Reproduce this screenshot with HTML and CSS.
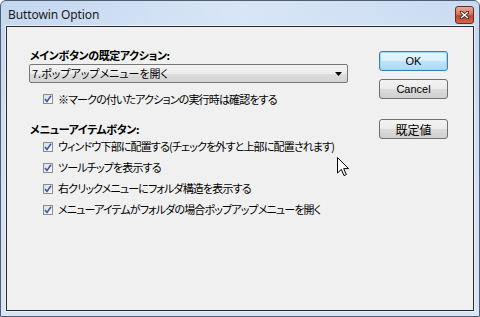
FILE: index.html
```html
<!DOCTYPE html>
<html lang="ja">
<head>
<meta charset="utf-8">
<title>Buttowin Option</title>
<link rel="stylesheet" href="styles.css">
</head>
<body>
<div class="window">
  <div class="titlebar">
    <span class="title">Buttowin Option</span>
    <span class="close"><svg width="9" height="8" viewBox="0 0 9 8"><path d="M1 1 L8 7 M8 1 L1 7" stroke="#3a1a1a" stroke-width="3" stroke-linecap="square"/><path d="M1 1 L8 7 M8 1 L1 7" stroke="#ffffff" stroke-width="1.6"/></svg></span>
  </div>
  <div class="client">
    <div class="left">
      <div class="heading">メインボタンの既定アクション:</div>
      <div class="combo">
        <span class="combo-text">7.ポップアップメニューを開く</span>
        <svg class="combo-arrow" width="7" height="4" viewBox="0 0 7 4"><path d="M0 0 H7 L3.5 4 Z" fill="#000"/></svg>
      </div>
      <div class="row first"><span class="cb"><svg width="8" height="8" viewBox="0 0 8 8"><path d="M1 4 L3 6.5 L7 0.8" fill="none" stroke="#4257a6" stroke-width="1.6"/></svg></span>※マークの付いたアクションの実行時は確認をする</div>
      <div class="heading second">メニューアイテムボタン:</div>
      <div class="row"><span class="cb"><svg width="8" height="8" viewBox="0 0 8 8"><path d="M1 4 L3 6.5 L7 0.8" fill="none" stroke="#4257a6" stroke-width="1.6"/></svg></span>ウィンドウ下部に配置する(チェックを外すと上部に配置されます)</div>
      <div class="row"><span class="cb"><svg width="8" height="8" viewBox="0 0 8 8"><path d="M1 4 L3 6.5 L7 0.8" fill="none" stroke="#4257a6" stroke-width="1.6"/></svg></span>ツールチップを表示する</div>
      <div class="row"><span class="cb"><svg width="8" height="8" viewBox="0 0 8 8"><path d="M1 4 L3 6.5 L7 0.8" fill="none" stroke="#4257a6" stroke-width="1.6"/></svg></span>右クリックメニューにフォルダ構造を表示する</div>
      <div class="row"><span class="cb"><svg width="8" height="8" viewBox="0 0 8 8"><path d="M1 4 L3 6.5 L7 0.8" fill="none" stroke="#4257a6" stroke-width="1.6"/></svg></span>メニューアイテムがフォルダの場合ポップアップメニューを開く</div>
    </div>
    <div class="right">
      <div class="btn default">OK</div>
      <div class="btn">Cancel</div>
      <div class="btn reset">既定値</div>
    </div>
    <svg class="cursor" width="13" height="20" viewBox="0 0 13 20"><path d="M0.5 0.5 L0.5 16 L4.3 12.4 L7 18.6 L9.3 17.6 L6.7 11.6 L11.6 11.6 Z" fill="#fff" stroke="#000" stroke-width="1" stroke-linejoin="miter"/></svg>
  </div>
</div>
</body>
</html>
```
FILE: styles.css
```css
html, body {
  margin: 0;
  padding: 0;
  background: #ffffff;
}
.window {
  width: 480px;
  height: 317px;
  box-sizing: border-box;
  border: 1px solid #4f5f73;
  border-radius: 6px 6px 0 0;
  background: linear-gradient(180deg, #c3d7f0 0%, #cfdff3 40%, #d8e5f5 100%);
  display: flex;
  flex-direction: column;
}
.titlebar {
  height: 25px;
  display: flex;
  align-items: center;
  justify-content: space-between;
  padding: 0 5px 0 7px;
  background: linear-gradient(90deg, rgba(255,255,255,0.0), rgba(255,255,255,0.35) 50%, rgba(255,255,255,0.1));
}
.title {
  font-family: "Noto Sans", "Open Sans", sans-serif;
  font-size: 12px;
  color: #1a1a1a;
  letter-spacing: -0.1px;
  margin-top: 1px;
}
.close {
  width: 19px;
  height: 18px;
  margin-top: 2px;
  box-sizing: border-box;
  border: 1px solid #6b2c25;
  border-radius: 3px;
  background: linear-gradient(180deg, #e9a99a 0%, #d8705b 45%, #c1432c 55%, #d2674b 100%);
  display: flex;
  align-items: center;
  justify-content: center;
}
.client {
  flex: 1;
  margin: 0 5px 5px 5px;
  border: 1px solid #2b2b2b;
  outline: 1px solid #e9f0f8;
  background: #f0f0f0;
  display: flex;
  align-items: flex-start;
  position: relative;
  font-family: "Noto Sans CJK JP", "Noto Sans", sans-serif;
  font-size: 11px;
  color: #000;
  font-feature-settings: "palt";
}
.left {
  width: 319px;
  padding: 21px 0 0 22px;
  display: flex;
  flex-direction: column;
}
.heading {
  font-weight: bold;
  line-height: 14px;
  height: 14px;
  padding-left: 1px;
  letter-spacing: -0.4px;
  white-space: nowrap;
}
.heading.second {
  margin-top: 15px;
}
.combo {
  margin-top: 2px;
  height: 19px;
  box-sizing: border-box;
  border: 1px solid #777;
  border-radius: 2px;
  background: linear-gradient(180deg, #f3f3f3 0%, #ececec 50%, #dedede 51%, #d2d2d2 100%);
  display: flex;
  align-items: center;
  justify-content: space-between;
  padding: 0 5px 0 2px;
}
.combo-text {
  line-height: 17px;
}
.combo-arrow {
  margin-top: 1px;
}
.row {
  height: 21px;
  line-height: 21px;
  display: flex;
  align-items: center;
  padding-left: 14px;
  white-space: nowrap;
  letter-spacing: -0.85px;
}
.row.first {
  margin-top: 8px;
  height: 16px;
  line-height: 16px;
}
.cb {
  width: 10px;
  height: 10px;
  box-sizing: border-box;
  border: 1px solid #8a8d92;
  background: linear-gradient(135deg, #d9dde3 0%, #eef0f3 60%, #fbfbfb 100%);
  margin-right: 5px;
  display: flex;
  align-items: center;
  justify-content: center;
  flex: none;
}
.right {
  margin-left: 31px;
  padding-top: 24px;
  display: flex;
  flex-direction: column;
  gap: 8px;
}
.btn {
  width: 69px;
  height: 20px;
  box-sizing: border-box;
  border: 1px solid #707070;
  border-radius: 3px;
  background: linear-gradient(180deg, #f3f3f3 0%, #ebebeb 49%, #dddddd 50%, #cfcfcf 100%);
  font-family: "Liberation Sans", Arial, "Noto Sans CJK JP", sans-serif;
  font-size: 11px;
  display: flex;
  align-items: center;
  justify-content: center;
  color: #000;
}
.btn.default {
  border-color: #3c7fb1;
  box-shadow: inset 0 0 0 1px #9fd6f3;
  background: linear-gradient(180deg, #eaf6fd 0%, #d9f0fc 49%, #bee6fd 50%, #a7d9f5 100%);
}
.btn.reset {
  margin-top: 12px;
  font-family: "Noto Sans CJK JP", sans-serif;
  font-size: 12px;
}
.cursor {
  position: absolute;
  left: 330px;
  top: 130px;
}
```
